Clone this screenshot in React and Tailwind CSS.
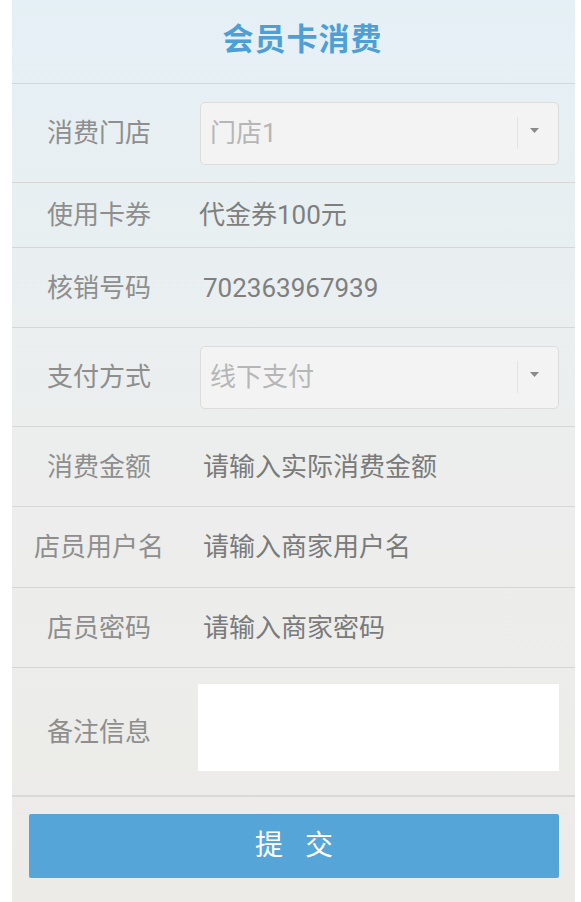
import React from "react";

const font = { fontFamily: 'Roboto, "Noto Sans CJK SC", "Noto Sans", sans-serif' };

function Label({ children }) {
  return (
    <div className="w-[174px] shrink-0 text-center text-[26px] text-[#8e8e8e] leading-none">
      {children}
    </div>
  );
}

function Select({ value }) {
  return (
    <div className="flex-1 h-[63px] rounded-[5px] border border-[#dcdcdc] bg-[#f3f3f3] flex items-center">
      <div className="flex-1 pl-[9px] text-[26px] text-[#b6b6b6] leading-none">{value}</div>
      <div className="w-px h-[32px] bg-[#e2e2e2]" />
      <div className="w-[32px] flex justify-center pb-[6px]">
        <svg width="9" height="5" viewBox="0 0 9 5">
          <path d="M0 0 L9 0 L4.5 5 Z" fill="#8a8a8a" />
        </svg>
      </div>
      <div className="w-[8px]" />
    </div>
  );
}

export default function App() {
  return (
    <div className="w-[581px] min-h-[902px] bg-white" style={font}>
      <div className="ml-[12px] w-[563px] min-h-[902px] bg-gradient-to-b from-[#e5f0f6] via-[#eceeed] to-[#edebe8] flex flex-col">
        <div className="h-[84px] border-b border-[#d6d6d6] flex items-center justify-center pb-[2px] pl-[18px]">
          <span className="text-[31px] font-bold text-[#4d9fd6] tracking-[1px]">会员卡消费</span>
        </div>

        <div className="h-[99px] border-b border-[#d6d6d6] flex items-center">
          <Label>消费门店</Label>
          <div className="flex-1 pl-[14px] pr-[16px] flex">
            <Select value="门店1" />
          </div>
        </div>

        <div className="h-[65px] border-b border-[#d6d6d6] flex items-center">
          <Label>使用卡券</Label>
          <div className="pl-[13px] text-[26px] text-[#7f7f7f] leading-none">代金券100元</div>
        </div>

        <div className="h-[80px] border-b border-[#d6d6d6] flex items-center">
          <Label>核销号码</Label>
          <div className="pl-[17px] text-[26px] text-[#7f7f7f] leading-none">702363967939</div>
        </div>

        <div className="h-[99px] border-b border-[#d6d6d6] flex items-center">
          <Label>支付方式</Label>
          <div className="flex-1 pl-[14px] pr-[16px] flex">
            <Select value="线下支付" />
          </div>
        </div>

        <div className="h-[80px] border-b border-[#d6d6d6] flex items-center">
          <Label>消费金额</Label>
          <div className="pl-[17px] text-[26px] text-[#7a7a7a] leading-none">请输入实际消费金额</div>
        </div>

        <div className="h-[81px] border-b border-[#d6d6d6] flex items-center">
          <Label>店员用户名</Label>
          <div className="pl-[17px] text-[26px] text-[#7a7a7a] leading-none">请输入商家用户名</div>
        </div>

        <div className="h-[80px] border-b border-[#d6d6d6] flex items-center">
          <Label>店员密码</Label>
          <div className="pl-[17px] text-[26px] text-[#7a7a7a] leading-none">请输入商家密码</div>
        </div>

        <div className="h-[129px] border-b-2 border-[#d9d9d9] flex items-center">
          <Label>备注信息</Label>
          <div className="flex-1 pl-[12px] pr-[16px] flex self-start pt-[16px]">
            <div className="flex-1 h-[87px] bg-white" />
          </div>
        </div>

        <div className="pt-[17px] px-[17px] pr-[16px]">
          <div className="h-[64px] rounded-[2px] bg-[#56a5d8] flex items-center justify-center gap-[22px] text-white text-[28px] leading-none">
            <span>提</span>
            <span>交</span>
          </div>
        </div>
      </div>
    </div>
  );
}
